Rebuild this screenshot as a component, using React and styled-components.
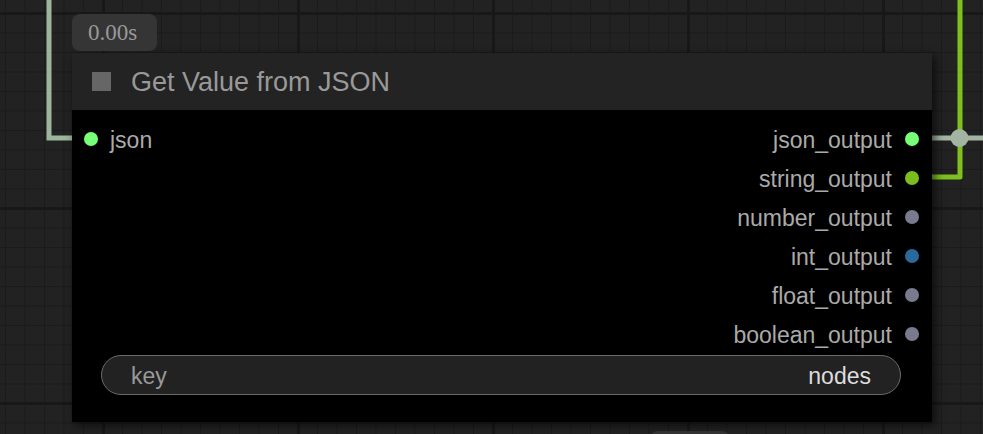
import React from 'react';
import styled, { createGlobalStyle } from 'styled-components';

const GlobalStyle = createGlobalStyle`
  html, body {
    margin: 0;
    padding: 0;
    background: #222;
    overflow: hidden;
  }
`;

// Canvas with the litegraph grid
const Canvas = styled.div`
  position: relative;
  width: 983px;
  height: 434px;
  overflow: hidden;
  font-family: 'Liberation Sans', Arial, sans-serif;
  background-color: #222222;
  background-image:
    linear-gradient(90deg, #181818 3px, transparent 3px),
    linear-gradient(180deg, #181818 3px, transparent 3px),
    linear-gradient(90deg, #1b1b1b 1px, transparent 1px),
    linear-gradient(180deg, #1b1b1b 1px, transparent 1px);
  background-size: 195px 195px, 195px 195px, 19.5px 19.5px, 19.5px 19.5px;
  background-position: 102px 0, 0 12px, 5px 0, 0 13px;
`;

const Wires = styled.svg`
  position: absolute;
  inset: 0;
`;

// Node
const Node = styled.div`
  position: absolute;
  left: 72px;
  top: 53px;
  width: 860px;
  display: flex;
  flex-direction: column;
  box-shadow: 3px 3px 9px rgba(0, 0, 0, 0.65);
`;

const Badge = styled.div`
  position: absolute;
  left: 0;
  bottom: calc(100% + 2px);
  height: 37px;
  padding: 0 20px 0 16px;
  display: flex;
  align-items: center;
  border-radius: 8px;
  background: #353535;
  color: #999;
  font-family: 'Liberation Serif', 'Times New Roman', serif;
  font-size: 23px;
`;

const OtherBadge = styled.div`
  position: absolute;
  left: 650px;
  top: 431px;
  width: 80px;
  height: 24px;
  border-radius: 8px;
  background: #333;
`;

const Header = styled.div`
  height: 57px;
  display: flex;
  align-items: center;
  gap: 20px;
  padding-left: 20px;
  background: #232323;
`;

const TitleBox = styled.div`
  width: 19px;
  height: 19px;
  background: #666;
`;

const Title = styled.div`
  color: #999;
  font-size: 27px;
  line-height: 1;
  padding-top: 1px;
`;

const Body = styled.div`
  height: 312px;
  box-sizing: border-box;
  padding: 9px 0 0 0;
  background: #000;
  display: flex;
  flex-direction: column;
`;

const Slots = styled.div`
  display: grid;
  grid-template-columns: 1fr 1fr;
`;

const Column = styled.div`
  display: flex;
  flex-direction: column;
  align-items: ${(p) => (p.$right ? 'flex-end' : 'flex-start')};
`;

const Slot = styled.div`
  height: 39px;
  display: flex;
  align-items: center;
  flex-direction: ${(p) => (p.$right ? 'row-reverse' : 'row')};
  gap: ${(p) => (p.$right ? '13px' : '12px')};
  padding: ${(p) => (p.$right ? '0 13px 0 0' : '0 0 0 12px')};
  color: #aaa;
  font-size: 23px;
`;

const SlotLabel = styled.span`
  padding-top: 4px;
`;

const Dot = styled.span`
  width: 14px;
  height: 14px;
  border-radius: 50%;
  background: ${(p) => p.$color};
`;

const Widget = styled.div`
  margin: 2px 31px 0 29px;
  height: 40px;
  box-sizing: border-box;
  border: 1px solid #6a6a6a;
  border-radius: 20px;
  background: #222;
  display: flex;
  align-items: center;
  justify-content: space-between;
  padding: 2px 29px 0 29px;
  font-size: 23px;
`;

const WidgetLabel = styled.span`
  color: #999;
`;

const WidgetValue = styled.span`
  color: #ddd;
`;

const outputs = [
  { name: 'json_output', color: '#77ff77' },
  { name: 'string_output', color: '#7cbd1f' },
  { name: 'number_output', color: '#7a7a8e' },
  { name: 'int_output', color: '#29699c' },
  { name: 'float_output', color: '#7a7a8e' },
  { name: 'boolean_output', color: '#7a7a8e' },
];

const App = () => {
  return (
    <Canvas>
      <GlobalStyle />
      <Wires width="983" height="434">
        <path d="M49 0 V138 H72" fill="none" stroke="#9cb59c" strokeWidth="5" strokeLinejoin="miter" />
        <path d="M960 0 V177 H930" fill="none" stroke="#7ec01e" strokeWidth="5" strokeLinejoin="round" />
        <path d="M930 138 H983" fill="none" stroke="#a3b4a3" strokeWidth="5" />
        <circle cx="959.5" cy="138" r="9" fill="#a3b4a3" />
      </Wires>
      <OtherBadge />
      <Node>
        <Badge>0.00s</Badge>
        <Header>
          <TitleBox />
          <Title>Get Value from JSON</Title>
        </Header>
        <Body>
          <Slots>
            <Column>
              <Slot>
                <Dot $color="#77ff77" />
                <SlotLabel>json</SlotLabel>
              </Slot>
            </Column>
            <Column $right>
              {outputs.map((o) => (
                <Slot $right key={o.name}>
                  <Dot $color={o.color} />
                  <SlotLabel>{o.name}</SlotLabel>
                </Slot>
              ))}
            </Column>
          </Slots>
          <Widget>
            <WidgetLabel>key</WidgetLabel>
            <WidgetValue>nodes</WidgetValue>
          </Widget>
        </Body>
      </Node>
    </Canvas>
  );
};

export default App;
